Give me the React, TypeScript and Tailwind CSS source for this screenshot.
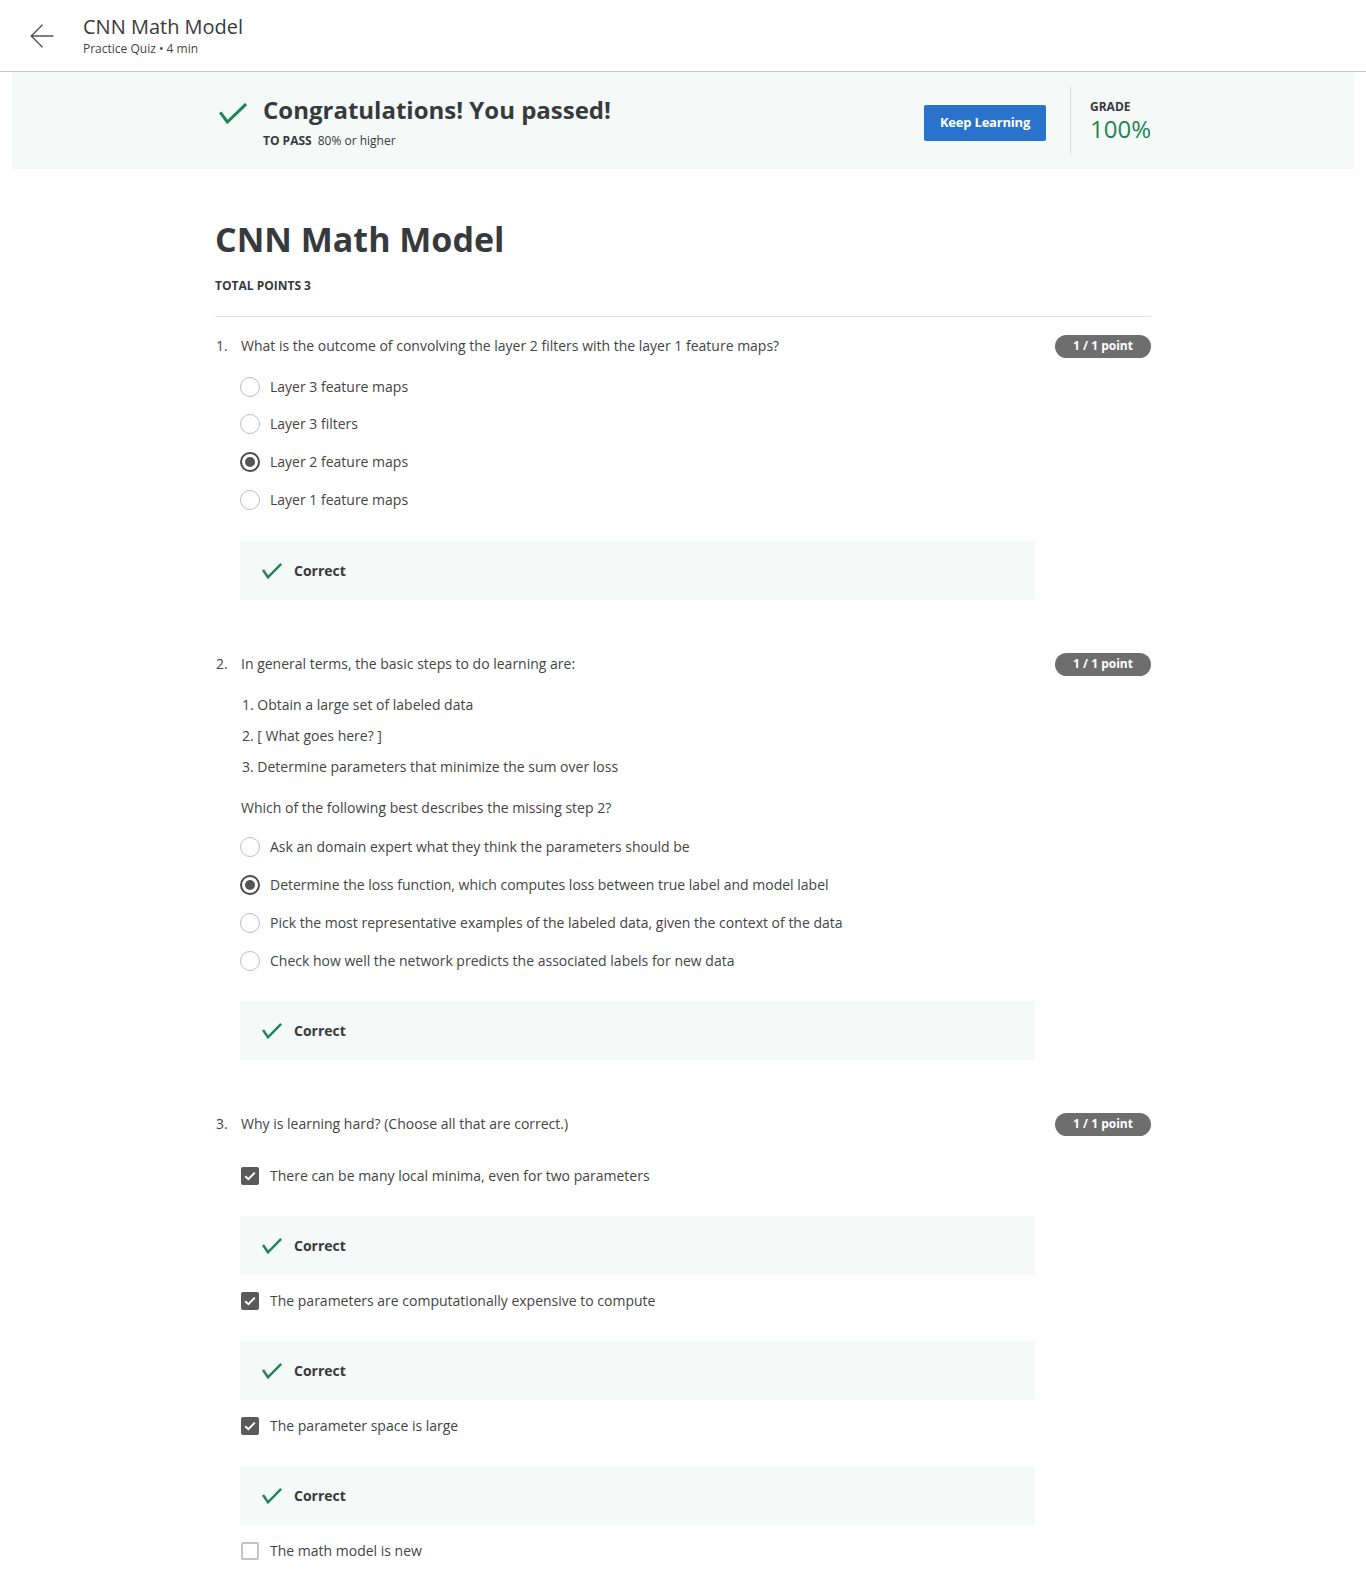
import React from "react";

const font = { fontFamily: '"Open Sans", "Noto Sans", Arial, sans-serif' };

function Check({ w, h, sw }: { w: number; h: number; sw: number }) {
  return (
    <svg width={w} height={h} viewBox={`0 0 ${w} ${h}`} fill="none">
      <polyline
        points={`${sw / 2 + 0.5},${h * 0.5} ${w * 0.3},${h - sw / 2 - 0.5} ${w - sw / 2 - 0.5},${sw / 2 + 0.5}`}
        stroke="#1f8354"
        strokeWidth={sw}
        strokeLinecap="square"
        strokeLinejoin="miter"
      />
    </svg>
  );
}

function Radio({ selected, label, tall }: { selected?: boolean; label: string; tall?: boolean }) {
  return (
    <div className={`flex items-center ${tall ? "h-[38px]" : "h-[37.6px]"}`}>
      {selected ? (
        <div className="flex h-[20px] w-[20px] items-center justify-center rounded-full border-[2.5px] border-[#4a4a4a]">
          <div className="h-[10px] w-[10px] rounded-full bg-[#555555]" />
        </div>
      ) : (
        <div className="h-[20px] w-[20px] rounded-full border-[1.5px] border-[#bdbdbd]" />
      )}
      <span className="ml-[10px] text-[14px] leading-[20px] text-[#444444]">{label}</span>
    </div>
  );
}

function CheckBox({ checked, label }: { checked?: boolean; label: string }) {
  return (
    <div className="flex h-[38px] items-center">
      <div className="flex h-[20px] w-[20px] items-center justify-center">
        {checked ? (
          <div className="flex h-[18px] w-[18px] items-center justify-center rounded-[2px] bg-[#5a5a5a]">
            <svg width="12" height="10" viewBox="0 0 12 10" fill="none">
              <polyline points="1.2,5.2 4.4,8.2 10.8,1.6" stroke="#ffffff" strokeWidth="2" />
            </svg>
          </div>
        ) : (
          <div className="h-[18px] w-[18px] rounded-[2px] border-2 border-[#c4c4c4]" />
        )}
      </div>
      <span className="ml-[10px] text-[14px] leading-[20px] text-[#444444]">{label}</span>
    </div>
  );
}

function Correct({ className = "" }: { className?: string }) {
  return (
    <div className={`flex h-[59px] w-[795px] items-center bg-[#f5f9f8] pl-[22px] ${className}`}>
      <Check w={20} h={16} sw={2.4} />
      <span className="ml-[12px] text-[14px] font-bold leading-[20px] text-[#373a3c]">Correct</span>
    </div>
  );
}

function Badge() {
  return (
    <div className="flex h-[23px] w-[96px] shrink-0 items-center justify-center rounded-full bg-[#6e6e6e] text-[12px] font-bold leading-none text-white">
      1 / 1 point
    </div>
  );
}

function Question({
  num,
  text,
  children,
  className = "",
}: {
  num: string;
  text: string;
  children: React.ReactNode;
  className?: string;
}) {
  return (
    <div className={`flex justify-between ${className}`}>
      <div className="flex-1">
        <div className="flex h-[24px] items-center text-[14px] leading-[20px] text-[#444444]">
          <span className="w-[25px] pl-[1px]">{num}</span>
          <span className="pl-[1px]">{text}</span>
        </div>
        <div className="pl-[25px]">{children}</div>
      </div>
      <div className="pt-[0.5px]">
        <Badge />
      </div>
    </div>
  );
}

export default function App() {
  return (
    <div className="min-h-[1584px] bg-white text-[#373a3c]" style={font}>
      {/* Header */}
      <div className="flex h-[72px] items-center border-b border-[#c9c9c9] pl-[30px]">
        <svg width="24" height="24" viewBox="0 0 24 24" fill="none">
          <path d="M1.2 12H23.5M12.5 0.7L1.2 12L12.5 23.3" stroke="#555" strokeWidth="1.4" />
        </svg>
        <div className="ml-[29px] pb-[1px]">
          <div className="text-[20px] leading-[26px] text-[#3a3a3a]">CNN Math Model</div>
          <div className="mt-[1px] text-[12px] leading-[16px] text-[#444]">Practice Quiz • 4 min</div>
        </div>
      </div>

      {/* Banner */}
      <div className="mx-[12px] flex h-[97px] items-center bg-[#f5f9f8]">
        <div className="mx-auto flex w-[936px] items-center justify-between">
          <div className="mt-[2px] flex items-start">
            <div className="ml-[4px] mt-[9px]">
              <Check w={28} h={21} sw={3} />
            </div>
            <div className="ml-[16px]">
              <div className="text-[24px] font-bold leading-[32px] text-[#373a3c]">
                Congratulations! You passed!
              </div>
              <div className="mt-[7px] text-[12px] leading-[16px] text-[#373a3c]">
                <span className="font-bold">TO PASS</span>
                <span className="ml-[6px]">80% or higher</span>
              </div>
            </div>
          </div>
          <div className="flex items-center">
            <button className="mt-[5px] flex h-[36px] w-[122px] items-center justify-center rounded-[2px] bg-[#2a73cc] text-[13px] font-bold tracking-[-0.2px] text-white">
              Keep Learning
            </button>
            <div className="ml-[24px] h-[68px] w-px bg-[#dcdcdc]" />
            <div className="ml-[19px]">
              <div className="text-[12px] font-bold leading-[16px] text-[#373a3c]">GRADE</div>
              <div className="text-[24px] leading-[28px] text-[#1f8354]">100%</div>
            </div>
          </div>
        </div>
      </div>

      {/* Main */}
      <div className="mx-auto w-[936px] pb-[20px] pt-[46px]">
        <h1 className="text-[34px] font-bold leading-[48px] text-[#373a3c]">CNN Math Model</h1>
        <div className="mt-[15px] text-[12px] font-bold leading-[16px] text-[#373a3c]">TOTAL POINTS 3</div>
        <div className="mt-[22px] h-px bg-[#e1e1e1]" />

        <Question
          className="mt-[17px]"
          num="1."
          text="What is the outcome of convolving the layer 2 filters with the layer 1 feature maps?"
        >
          <div className="mt-[10px]">
            <Radio label="Layer 3 feature maps" />
            <Radio label="Layer 3 filters" />
            <Radio selected label="Layer 2 feature maps" />
            <Radio label="Layer 1 feature maps" />
          </div>
          <Correct className="mt-[23px]" />
        </Question>

        <Question className="mt-[52px]" num="2." text="In general terms, the basic steps to do learning are:">
          <div className="mt-[13px] pl-[2px] text-[14px] leading-[20px] text-[#444444]">
            <div className="flex h-[31px] items-center">1. Obtain a large set of labeled data</div>
            <div className="flex h-[31px] items-center">2. [ What goes here? ]</div>
            <div className="flex h-[31px] items-center">3. Determine parameters that minimize the sum over loss</div>
          </div>
          <div className="mt-[16px] pl-[1px] text-[14px] leading-[20px] text-[#444444]">
            Which of the following best describes the missing step 2?
          </div>
          <div className="mt-[10px]">
            <Radio tall label="Ask an domain expert what they think the parameters should be" />
            <Radio tall selected label="Determine the loss function, which computes loss between true label and model label" />
            <Radio tall label="Pick the most representative examples of the labeled data, given the context of the data" />
            <Radio tall label="Check how well the network predicts the associated labels for new data" />
          </div>
          <Correct className="mt-[21px]" />
        </Question>

        <Question className="mt-[52px]" num="3." text="Why is learning hard? (Choose all that are correct.)">
          <div className="mt-[21px]">
            <CheckBox checked label="There can be many local minima, even for two parameters" />
          </div>
          <Correct className="mt-[21px]" />
          <div className="mt-[7px]">
            <CheckBox checked label="The parameters are computationally expensive to compute" />
          </div>
          <Correct className="mt-[21px]" />
          <div className="mt-[7px]">
            <CheckBox checked label="The parameter space is large" />
          </div>
          <Correct className="mt-[21px]" />
          <div className="mt-[7px]">
            <CheckBox label="The math model is new" />
          </div>
        </Question>
      </div>
    </div>
  );
}
